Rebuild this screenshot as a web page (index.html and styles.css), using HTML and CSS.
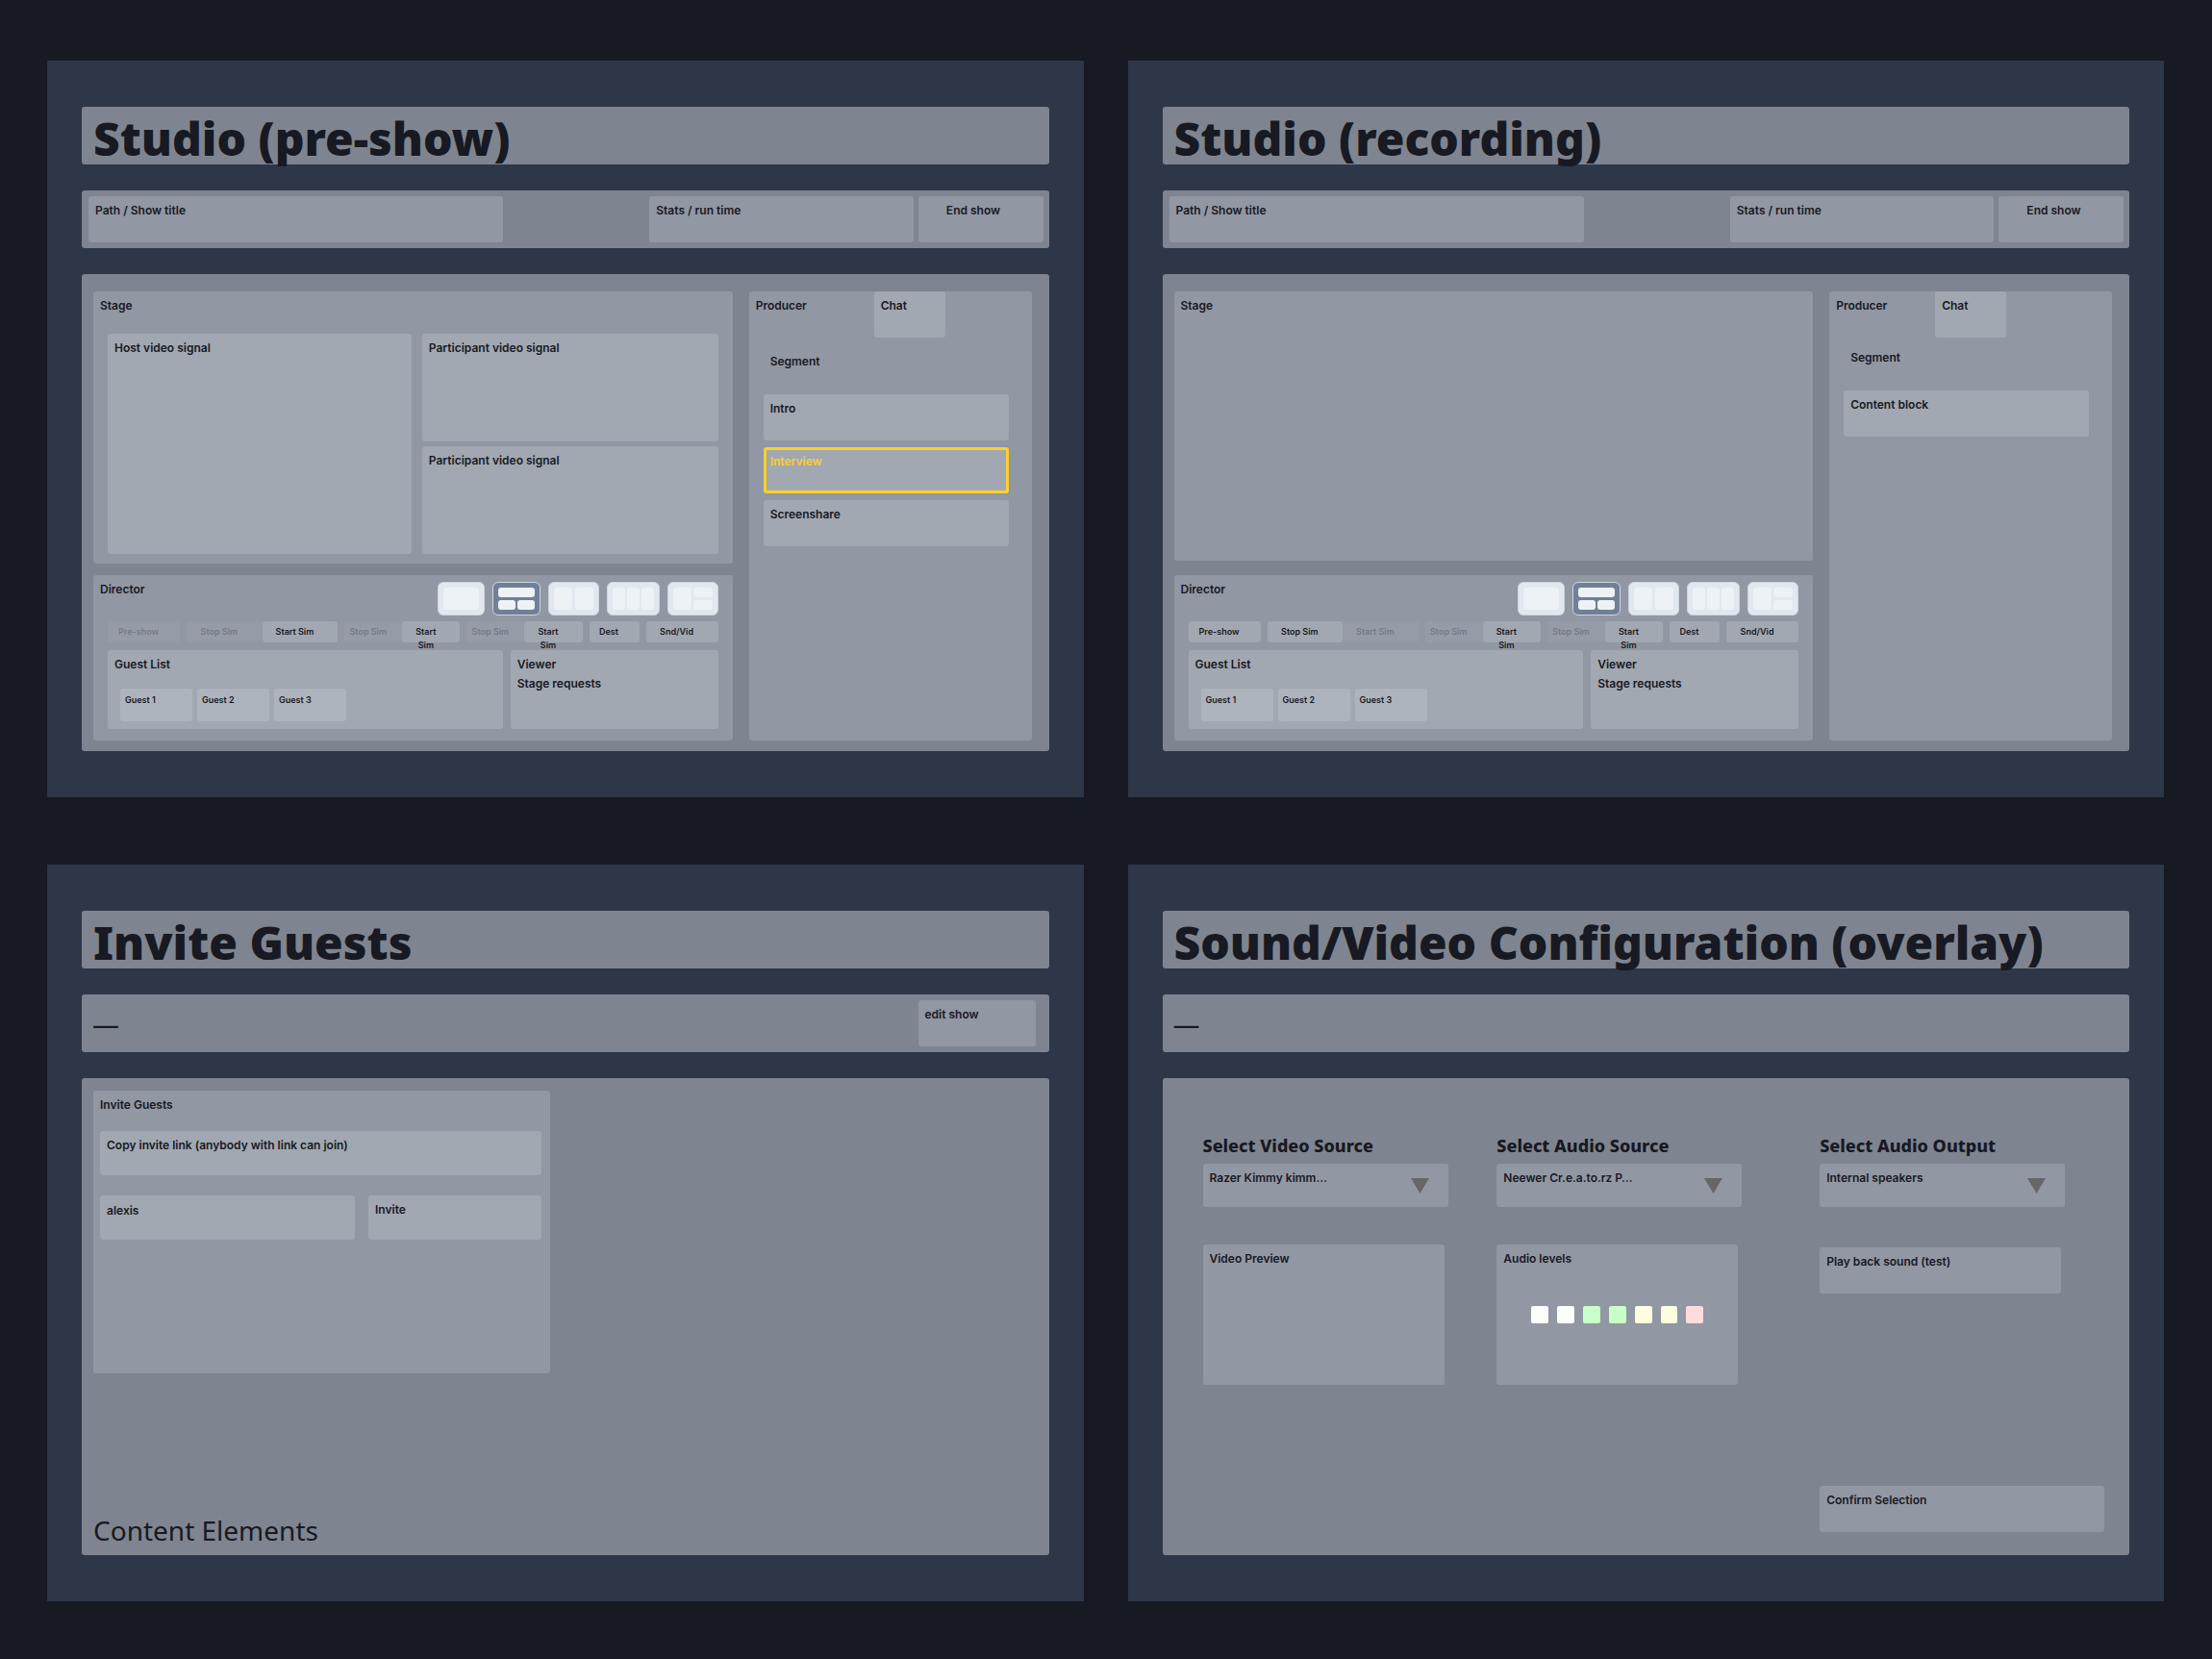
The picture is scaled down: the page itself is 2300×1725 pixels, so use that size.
FILE: index.html
```html
<!DOCTYPE html>
<html lang="en">
<head>
    <meta charset="UTF-8">
    <meta name="viewport" content="width=device-width, initial-scale=1.0">
    <title>Studio wireframes</title>
    <link rel="stylesheet" href="styles.css">
</head>
<body>
    <main class="board">

        <!-- Studio, before the show -->
        <section class="screen">
            <h1 class="bar title">Studio (pre-show)</h1>
            <header class="bar nav">
                <div class="box path">Path / Show title</div>
                <div class="box stats">Stats / run time</div>
                <button class="box end">End show</button>
            </header>
            <div class="panel studio">
                <div class="left">
                    <div class="box stage">
                        <h2 class="label">Stage</h2>
                        <div class="signals">
                            <div class="box light host">Host video signal</div>
                            <div class="box light">Participant video signal</div>
                            <div class="box light">Participant video signal</div>
                        </div>
                    </div>
                    <div class="box director">
                        <div class="director-head">
                            <h2 class="label">Director</h2>
                            <div class="layouts">
                                <button class="layout" aria-label="Single"><svg width="37" height="23"><rect width="37" height="23" rx="3"/></svg></button>
                                <button class="layout active" aria-label="One over two"><svg width="38" height="23"><rect width="38" height="10" rx="3"/><rect y="13" width="18" height="10" rx="3"/><rect x="20" y="13" width="18" height="10" rx="3"/></svg></button>
                                <button class="layout" aria-label="Two columns"><svg width="41" height="23"><rect width="19" height="23" rx="3"/><rect x="22" width="19" height="23" rx="3"/></svg></button>
                                <button class="layout" aria-label="Three columns"><svg width="43" height="23"><rect width="13" height="23" rx="3"/><rect x="15" width="13" height="23" rx="3"/><rect x="30" width="13" height="23" rx="3"/></svg></button>
                                <button class="layout" aria-label="One beside two"><svg width="41" height="23"><rect width="19" height="23" rx="3"/><rect x="21" width="20" height="10" rx="3"/><rect x="21" y="13" width="20" height="10" rx="3"/></svg></button>
                            </div>
                        </div>
                        <div class="controls">
                            <div class="group"><button class="control" disabled>Pre-show</button></div>
                            <div class="group"><button class="control" disabled>Stop Sim</button><button class="control">Start Sim</button></div>
                            <div class="group"><button class="control" disabled>Stop Sim</button><button class="control">Start<br>Sim</button></div>
                            <div class="group"><button class="control" disabled>Stop Sim</button><button class="control">Start<br>Sim</button></div>
                            <div class="group"><button class="control">Dest</button></div>
                            <div class="group"><button class="control">Snd/Vid</button></div>
                        </div>
                        <div class="people">
                            <div class="box light">
                                Guest List
                                <div class="guests">
                                    <div class="guest">Guest 1</div>
                                    <div class="guest">Guest 2</div>
                                    <div class="guest">Guest 3</div>
                                </div>
                            </div>
                            <div class="box light">Viewer<br>Stage requests</div>
                        </div>
                    </div>
                </div>
                <aside class="box producer">
                    <div class="tabs">
                        <h2 class="label">Producer</h2>
                        <button class="box light">Chat</button>
                    </div>
                    <div class="segments">
                        <h3 class="segment-title">Segment</h3>
                        <button class="box light">Intro</button>
                        <button class="box light selected">Interview</button>
                        <button class="box light">Screenshare</button>
                    </div>
                </aside>
            </div>
        </section>

        <!-- Studio, recording -->
        <section class="screen">
            <h1 class="bar title">Studio (recording)</h1>
            <header class="bar nav">
                <div class="box path">Path / Show title</div>
                <div class="box stats">Stats / run time</div>
                <button class="box end">End show</button>
            </header>
            <div class="panel studio recording">
                <div class="left">
                    <div class="box stage">
                        <h2 class="label">Stage</h2>
                    </div>
                    <div class="box director">
                        <div class="director-head">
                            <h2 class="label">Director</h2>
                            <div class="layouts">
                                <button class="layout" aria-label="Single"><svg width="37" height="23"><rect width="37" height="23" rx="3"/></svg></button>
                                <button class="layout active" aria-label="One over two"><svg width="38" height="23"><rect width="38" height="10" rx="3"/><rect y="13" width="18" height="10" rx="3"/><rect x="20" y="13" width="18" height="10" rx="3"/></svg></button>
                                <button class="layout" aria-label="Two columns"><svg width="41" height="23"><rect width="19" height="23" rx="3"/><rect x="22" width="19" height="23" rx="3"/></svg></button>
                                <button class="layout" aria-label="Three columns"><svg width="43" height="23"><rect width="13" height="23" rx="3"/><rect x="15" width="13" height="23" rx="3"/><rect x="30" width="13" height="23" rx="3"/></svg></button>
                                <button class="layout" aria-label="One beside two"><svg width="41" height="23"><rect width="19" height="23" rx="3"/><rect x="21" width="20" height="10" rx="3"/><rect x="21" y="13" width="20" height="10" rx="3"/></svg></button>
                            </div>
                        </div>
                        <div class="controls">
                            <div class="group"><button class="control">Pre-show</button></div>
                            <div class="group"><button class="control">Stop Sim</button><button class="control" disabled>Start Sim</button></div>
                            <div class="group"><button class="control" disabled>Stop Sim</button><button class="control">Start<br>Sim</button></div>
                            <div class="group"><button class="control" disabled>Stop Sim</button><button class="control">Start<br>Sim</button></div>
                            <div class="group"><button class="control">Dest</button></div>
                            <div class="group"><button class="control">Snd/Vid</button></div>
                        </div>
                        <div class="people">
                            <div class="box light">
                                Guest List
                                <div class="guests">
                                    <div class="guest">Guest 1</div>
                                    <div class="guest">Guest 2</div>
                                    <div class="guest">Guest 3</div>
                                </div>
                            </div>
                            <div class="box light">Viewer<br>Stage requests</div>
                        </div>
                    </div>
                </div>
                <aside class="box producer">
                    <div class="tabs">
                        <h2 class="label">Producer</h2>
                        <button class="box light">Chat</button>
                    </div>
                    <div class="segments">
                        <h3 class="segment-title">Segment</h3>
                        <button class="box light">Content block</button>
                    </div>
                </aside>
            </div>
        </section>

        <!-- Invite guests -->
        <section class="screen">
            <h1 class="bar title">Invite Guests</h1>
            <header class="bar nav">
                <span class="text">—</span>
                <button class="box edit">edit show</button>
            </header>
            <div class="panel invite">
                <form class="box invite-form">
                    <h2 class="label"><label for="guest">Invite Guests</label></h2>
                    <div class="fields">
                        <button type="button" class="box light copy">Copy invite link (anybody with link can join)</button>
                        <input class="box light" type="text" id="guest" value="alexis">
                        <button type="button" class="box light">Invite</button>
                    </div>
                </form>
                <p class="text">Content Elements</p>
            </div>
        </section>

        <!-- Sound and video setup -->
        <section class="screen">
            <h1 class="bar title">Sound/Video Configuration (overlay)</h1>
            <header class="bar nav">
                <span class="text">—</span>
            </header>
            <div class="panel config">
                <div class="source">
                    <label for="video">Select Video Source</label>
                    <div class="dropdown">
                        <select class="box" id="video"><option>Razer Kimmy kimm…</option></select>
                        <svg class="arrow" width="19" height="16"><path d="M0 0H19L9.5 16Z"/></svg>
                    </div>
                    <div class="box preview">Video Preview</div>
                </div>
                <div class="source">
                    <label for="audio">Select Audio Source</label>
                    <div class="dropdown">
                        <select class="box" id="audio"><option>Neewer Cr.e.a.to.rz P…</option></select>
                        <svg class="arrow" width="19" height="16"><path d="M0 0H19L9.5 16Z"/></svg>
                    </div>
                    <div class="box preview">
                        Audio levels
                        <div class="levels">
                            <span class="level"></span>
                            <span class="level"></span>
                            <span class="level green"></span>
                            <span class="level green"></span>
                            <span class="level yellow"></span>
                            <span class="level yellow"></span>
                            <span class="level red"></span>
                        </div>
                    </div>
                </div>
                <div class="source">
                    <label for="output">Select Audio Output</label>
                    <div class="dropdown">
                        <select class="box" id="output"><option>Internal speakers</option></select>
                        <svg class="arrow" width="19" height="16"><path d="M0 0H19L9.5 16Z"/></svg>
                    </div>
                    <button class="box playback">Play back sound (test)</button>
                    <button class="box confirm">Confirm Selection</button>
                </div>
            </div>
        </section>

    </main>
</body>
</html>
```

FILE: styles.css
```css
* {
    box-sizing: border-box;
}
body {
    margin: 0;
    background: #171923;
    color: #171923;
    font-family: "Noto Sans", sans-serif;
}
h1, h2, h3, p {
    margin: 0;
}
button, input, select {
    border: none;
    color: inherit;
}
button {
    cursor: pointer;
}
.board {
    display: grid;
    grid-template-columns: 1fr 1fr;
    gap: 70px 46px;
    padding: 63px 50px 60px 49px;
}
.screen {
    display: flex;
    flex-direction: column;
    gap: 27px;
    padding: 48px 36px;
    background: #2d3748;
}
.bar, .panel {
    background: #7f8590;
    border-radius: 3px;
}
.bar {
    height: 60px;
}
.panel {
    min-height: 496px;
}
.title {
    padding-left: 12px;
    font-size: 48px;
    font-weight: 900;
    line-height: 66px;
    white-space: nowrap;
}
.text {
    font-size: 28px;
    line-height: 40px;
}

/* boxes */
.box {
    display: block;
    padding: 5px 7px;
    border-radius: 3px;
    background: #9197a3;
    font-family: Inter, sans-serif;
    font-size: 12px;
    font-weight: 600;
    line-height: 20px;
    text-align: left;
}
button.box {
    display: flex;
    align-items: flex-start;
    min-height: 48px;
}
.light {
    background: #a1a8b2;
}
.label {
    font-size: 12px;
    font-weight: 600;
    line-height: 20px;
}

/* top bar */
.nav {
    display: grid;
    grid-template-columns: 434fr 143fr 276fr 130px;
    column-gap: 5px;
    align-items: center;
    padding: 0 6px 0 7px;
}
.nav .box {
    height: 48px;
}
.nav .text {
    padding-left: 4px;
}
.stats {
    grid-column: 3;
}
.nav .end {
    padding-right: 22px;
    justify-content: center;
}
.nav .edit {
    grid-column: 4;
    margin-right: 8px;
}

/* studio */
.studio {
    display: grid;
    grid-template-columns: 665fr 294fr;
    gap: 17px;
    padding: 18px 18px 11px 12px;
}
.left {
    display: flex;
    flex-direction: column;
    gap: 12px;
}
.recording .left {
    gap: 15px;
}
.stage {
    flex: 1;
    display: flex;
    flex-direction: column;
}
.signals {
    flex: 1;
    display: grid;
    grid-template-columns: 316fr 308fr;
    gap: 5px 11px;
    padding: 19px 8px 5px;
}
.host {
    grid-row: span 2;
}
.director, .producer {
    padding: 0;
}
.director-head {
    display: flex;
    justify-content: space-between;
    padding: 5px 15px 0 7px;
}
.layouts {
    display: flex;
    gap: 8px;
    padding-top: 2px;
}
.layout {
    display: flex;
    padding: 5px;
    border: 1px solid #cbd5e0;
    border-radius: 6px;
    background: #e2e8f0;
    fill: #edf2f7;
}
.layout.active {
    background: #718096;
}
.controls {
    display: grid;
    grid-template-columns: 75fr 157fr 120fr 120fr 52fr 75fr;
    gap: 7px;
    padding: 6px 15px 8px;
}
.group {
    display: flex;
}
.control {
    flex: 1;
    display: flex;
    justify-content: center;
    height: 22px;
    padding: 4px 11px 0 0;
    border-radius: 3px;
    background: #a1a8b2;
    font-family: Inter, sans-serif;
    font-size: 9px;
    font-weight: 600;
    line-height: 14px;
}
.control:disabled {
    background: #969ca7;
    color: #747b87;
    cursor: default;
}
.people {
    display: grid;
    grid-template-columns: 411fr 216fr;
    gap: 8px;
    padding: 0 15px 12px;
}
.people .box {
    min-height: 82px;
}
.guests {
    display: flex;
    gap: 5px;
    padding: 15px 6px 0;
}
.guest {
    width: 75px;
    height: 34px;
    padding: 5px;
    border-radius: 3px;
    background: #adb4be;
    font-size: 9px;
    font-weight: 600;
    line-height: 14px;
}

/* producer column */
.tabs {
    display: grid;
    grid-template-columns: 130px 74px;
}
.tabs .label {
    padding: 5px 7px;
}
.recording .tabs {
    grid-template-columns: 110px 74px;
}
.segments {
    display: flex;
    flex-direction: column;
    gap: 7px;
    padding: 10px 24px 0 15px;
}
.recording .segments {
    padding-top: 6px;
}
.segment-title {
    height: 42px;
    padding: 5px 7px;
    font-size: 12px;
    font-weight: 600;
    line-height: 20px;
}
.selected {
    box-shadow: inset 0 0 0 3px #fad02c;
    color: #fad02c;
}

/* invite */
.invite {
    display: flex;
    flex-direction: column;
    justify-content: space-between;
    align-items: flex-start;
    padding: 13px 12px 6px;
}
.invite-form {
    width: 475px;
    min-height: 294px;
}
.fields {
    display: grid;
    grid-template-columns: 265fr 180fr;
    gap: 21px 14px;
    padding: 17px 2px 0 0;
}
.fields .box {
    height: 46px;
    min-height: 0;
}
.fields .copy {
    grid-column: span 2;
}
.fields input {
    width: 100%;
    padding-bottom: 20px;
}

/* sound and video */
.config {
    display: grid;
    grid-template-columns: 306fr 336fr 296fr;
    padding: 54px 26px 24px 42px;
}
.source {
    display: flex;
    flex-direction: column;
}
.source label {
    margin-bottom: 3px;
    font-size: 18px;
    font-weight: 800;
    line-height: 32px;
}
.dropdown {
    position: relative;
    width: 255px;
    margin-bottom: 39px;
}
.dropdown select {
    appearance: none;
    width: 100%;
    height: 45px;
    padding-bottom: 20px;
}
.arrow {
    position: absolute;
    top: 15px;
    right: 20px;
    fill: #666;
    pointer-events: none;
}
.preview {
    width: 251px;
    height: 146px;
}
.levels {
    display: flex;
    gap: 9px;
    padding: 39px 29px;
}
.level {
    width: 18px;
    height: 18px;
    border-radius: 2px;
    background: #fafffc;
}
.green {
    background: #c9ffc8;
}
.yellow {
    background: #ffffdf;
}
.red {
    background: #ffdcdb;
}
.playback {
    width: 251px;
    margin-top: 3px;
}
.confirm {
    margin-top: auto;
}
```
